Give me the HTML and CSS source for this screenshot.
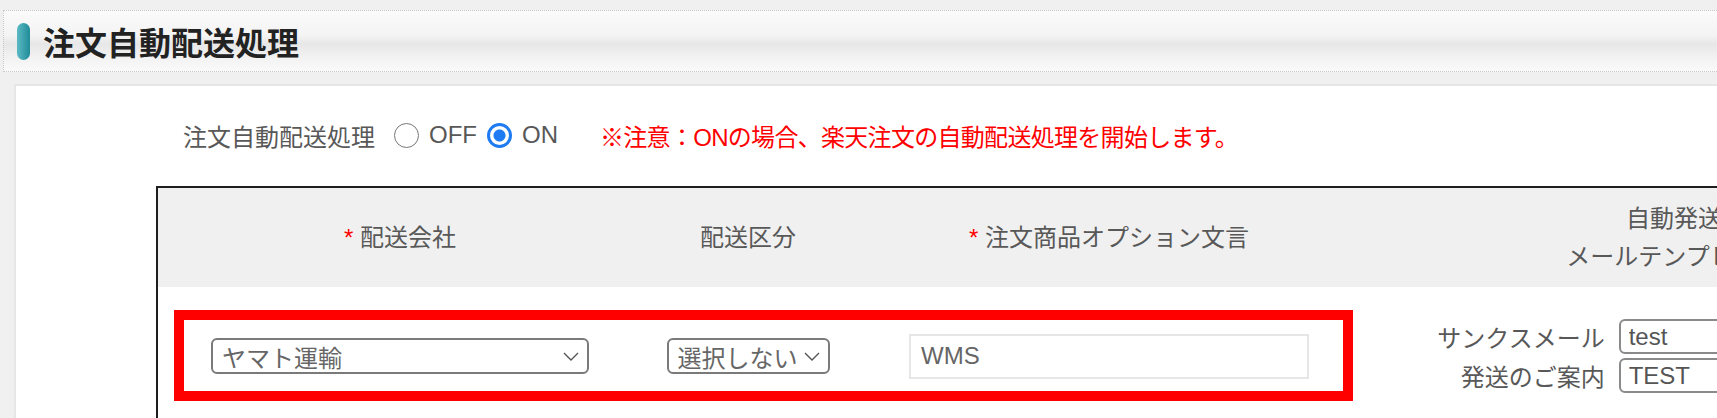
FILE: index.html
```html
<!DOCTYPE html>
<html lang="ja">
<head>
  <meta charset="UTF-8" />
  <title>注文自動配送処理</title>
  <link rel="stylesheet" href="styles.css">
</head>
<body>

  <div class="page-head">
    <span class="head-bar"></span>
    <h1>注文自動配送処理</h1>
  </div>

  <div class="panel">
    <div class="switch-row">
      <span class="switch-label">注文自動配送処理</span>
      <label class="radio"><input type="radio" name="auto"> OFF</label>
      <label class="radio"><input type="radio" name="auto" checked> ON</label>
      <span class="notice">※注意：ONの場合、楽天注文の自動配送処理を開始します。</span>
    </div>

    <div class="ship-table">
      <div class="ship-head">
        <div><span class="req">*</span> 配送会社</div>
        <div>配送区分</div>
        <div><span class="req">*</span> 注文商品オプション文言</div>
        <div class="mail-head">自動発送<br>メールテンプレート</div>
      </div>

      <div class="ship-row">
        <div class="select select-wide">
          <span>ヤマト運輸</span>
          <svg width="16" height="9" viewBox="0 0 16 9"><path d="M1 1l7 7 7-7" fill="none" stroke="#555" stroke-width="1.4"/></svg>
        </div>
        <div class="select select-narrow">
          <span>選択しない</span>
          <svg width="16" height="9" viewBox="0 0 16 9"><path d="M1 1l7 7 7-7" fill="none" stroke="#555" stroke-width="1.4"/></svg>
        </div>
        <input class="option-input" type="text" value="WMS">
        <div class="mail-set">
          <label>サンクスメール</label>
          <input class="mail-input" type="text" value="test">
          <label>発送のご案内</label>
          <input class="mail-input" type="text" value="TEST">
        </div>
        <div class="highlight"></div>
      </div>
    </div>
  </div>

</body>
</html>
```

FILE: styles.css
```css
body {
  margin: 0;
  background: #f0f0f0;
  font-family: "Liberation Sans", "Noto Sans CJK JP", sans-serif;
  color: #585858;
  overflow: hidden;
}

.page-head {
  display: flex;
  align-items: center;
  height: 60px;
  margin: 10px 0 0 3px;
  border: 1px dotted #c9c9c9;
  border-right: 0;
  background: linear-gradient(#fafafa 0%, #f4f4f4 40%, #e7e7e7 55%, #f3f3f3 80%, #f9f9f9 100%);
}

.head-bar {
  width: 13px;
  height: 37px;
  margin-left: 13px;
  border-radius: 7px;
  background: linear-gradient(90deg, #5bbac4, #1f8c98);
}

.page-head h1 {
  margin: 0 0 0 13px;
  font-size: 32px;
  font-weight: bold;
  color: #222;
}

.panel {
  height: 400px;
  margin: 12px 0 0 14px;
  border-top: 2px solid #e6e6e6;
  border-left: 2px solid #e6e6e6;
  background: #fff;
}

.switch-row {
  display: flex;
  align-items: center;
  height: 34px;
  padding: 32px 0 0 167px;
  font-size: 24px;
}

.radio {
  display: flex;
  align-items: center;
  gap: 10px;
  margin-left: 19px;
}

.radio + .radio {
  margin-left: 10px;
}

.radio input {
  appearance: none;
  width: 25px;
  height: 25px;
  margin: 0;
  border: 1.5px solid #777;
  border-radius: 50%;
  background: #fff;
}

.radio input:checked {
  border: 3px solid #1e7bf2;
  background: radial-gradient(circle, #1e7bf2 0 5.5px, #fff 6.5px);
}

.notice {
  margin-left: 42px;
  color: #ff0000;
  letter-spacing: -0.7px;
}

.ship-table {
  width: 2000px;
  margin: 34px 0 0 140px;
  border: 2px solid #1e1e1e;
}

.ship-head,
.ship-row {
  display: grid;
  grid-template-columns: 484px 212px 510px 628px;
  align-items: center;
}

.ship-head {
  height: 99px;
  background: #f0f0f0;
  text-align: center;
  font-size: 24px;
  line-height: 34px;
}

.req {
  color: #ff0000;
}

.mail-head {
  padding-right: 8px;
  line-height: 38px;
}

.ship-row {
  position: relative;
  height: 138px;
  justify-items: center;
  font-size: 24px;
}

.select {
  display: flex;
  align-items: center;
  justify-content: space-between;
  box-sizing: border-box;
  height: 36px;
  padding: 0 8px 0 9px;
  border: 2px solid #7a7a7a;
  border-radius: 6px;
  background: #fff;
  color: #666;
}

.select-wide {
  width: 378px;
}

.select-narrow {
  width: 163px;
  gap: 6px;
}

.option-input {
  box-sizing: border-box;
  width: 400px;
  height: 45px;
  padding: 0 10px;
  border: 2px solid #e6e6e6;
  font: inherit;
  color: #666;
  outline: none;
}

.mail-set {
  display: grid;
  grid-template-columns: auto 300px;
  column-gap: 14px;
  row-gap: 4px;
  align-items: center;
}

.mail-set label {
  text-align: right;
}

.mail-input {
  box-sizing: border-box;
  width: 300px;
  height: 35px;
  padding: 0 8px;
  border: 2px solid #8a8a8a;
  border-radius: 6px;
  font: inherit;
  color: #555;
  outline: none;
}

/* annotation frame */
.highlight {
  position: absolute;
  left: 16px;
  top: 23px;
  width: 1179px;
  height: 91px;
  box-sizing: border-box;
  border: 10px solid #ff0000;
  pointer-events: none;
}
```
